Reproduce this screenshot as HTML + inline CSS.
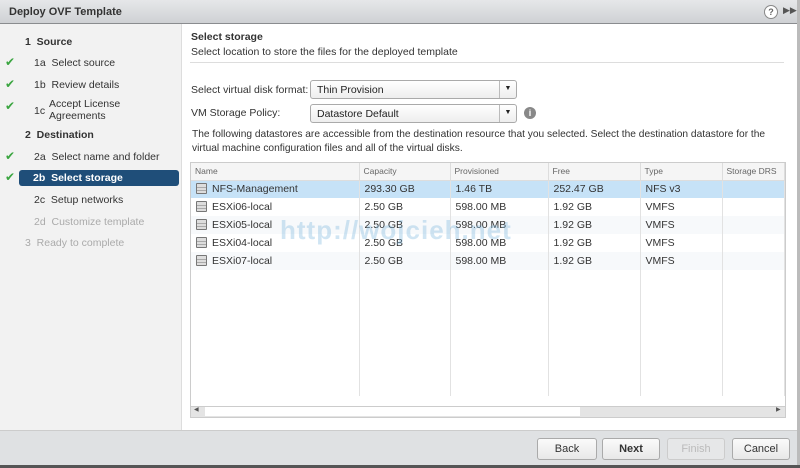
<!DOCTYPE html>
<html><head><style>
*{box-sizing:border-box;margin:0;padding:0}
body{width:800px;height:468px;overflow:hidden;background:#fff;font-family:"Liberation Sans",sans-serif;font-size:10.5px;color:#333;position:relative}
.abs{position:absolute}
.title{left:0;top:0;width:797px;height:24px;background:linear-gradient(#e6e7e9,#cfd1d4);border-bottom:1px solid #8a8c8f;font-weight:bold;font-size:11px;color:#333;padding:6px 9px}
.nav{left:0;top:24px;width:182px;height:406px;background:#f2f2f2;border-right:1px solid #ddd}
.nav div{position:absolute;font-size:10.5px;color:#333}
.nav .ck{color:#3aa540;font-size:12px;left:5px}
.nav .dis{color:#aaa}
.nav .sel{left:19px;width:160px;height:16px;background:#1f4e79;border-radius:3px;color:#fff;font-weight:bold;padding:2px 0 0 14px}
.footer{left:0;top:430px;width:797px;height:35px;background:#dfe1e3;border-top:1px solid #ccc}
.btn{position:absolute;top:438px;height:22px;border:1px solid #aaa;border-radius:3px;background:linear-gradient(#fafafa,#e8e8e8);text-align:center;padding-top:4px;font-size:11px}
.dd{position:absolute;left:310px;width:207px;height:19px;border:1px solid #aaa;border-radius:3px;background:linear-gradient(#fff,#eee);padding:3px 6px;font-size:10.5px;color:#222}
.dd span{position:absolute;right:0;top:0;width:17px;height:17px;border-left:1px solid #bbb;font-size:7px;text-align:center;padding-top:4px}
table{border-collapse:collapse;position:absolute;left:191px;top:163px;width:594px;font-size:10.5px;table-layout:fixed}
td{height:18px;padding:0 5px;border-right:1px solid #e2e2e2;white-space:nowrap;color:#333;overflow:hidden}
th{height:17px;font-weight:normal;font-size:8.5px;color:#666;text-align:left;padding:0 4px;border-right:1px solid #ddd;border-bottom:1px solid #ddd;background:#f5f5f5;white-space:nowrap;overflow:hidden}
.ic{display:inline-block;width:11px;height:11px;border:1px solid #777;background:linear-gradient(#ddd 33%,#777 33%,#777 40%,#ddd 40%,#ddd 66%,#777 66%,#777 73%,#ddd 73%);vertical-align:-2px;margin-right:5px;border-radius:1px}
</style></head><body>
<div class="abs title">Deploy OVF Template</div>
<div class="abs" style="left:764px;top:5px;width:14px;height:14px;border-radius:50%;border:1px solid #888;background:#fff;font-size:9px;text-align:center;font-weight:bold;color:#666;line-height:12px">?</div>
<div class="abs" style="left:783px;top:5px;font-size:9px;color:#555">▶▶</div>
<div class="abs" style="left:797px;top:0;width:3px;height:468px;background:#bbb"></div>
<div class="abs nav">
<div style="left:25px;top:12px;font-weight:bold">1&nbsp; Source</div>
<div class="ck" style="top:31px">✔</div><div style="left:34px;top:33px">1a&nbsp; Select source</div>
<div class="ck" style="top:53px">✔</div><div style="left:34px;top:55px">1b&nbsp; Review details</div>
<div class="ck" style="top:75px">✔</div><div style="left:34px;top:81px">1c</div><div style="left:49px;top:74px;line-height:12px">Accept License<br>Agreements</div>
<div style="left:25px;top:105px;font-weight:bold">2&nbsp; Destination</div>
<div class="ck" style="top:125px">✔</div><div style="left:34px;top:127px">2a&nbsp; Select name and folder</div>
<div class="ck" style="top:146px">✔</div><div class="sel" style="top:146px">2b&nbsp; Select storage</div>
<div style="left:34px;top:170px">2c&nbsp; Setup networks</div>
<div class="dis" style="left:34px;top:192px">2d&nbsp; Customize template</div>
<div class="dis" style="left:25px;top:213px">3&nbsp; Ready to complete</div>
</div>
<div class="abs" style="left:191px;top:31px;font-weight:bold">Select storage</div>
<div class="abs" style="left:191px;top:46px">Select location to store the files for the deployed template</div>
<div class="abs" style="left:190px;top:62px;width:594px;height:1px;background:#ddd"></div>
<div class="abs" style="left:191px;top:84px">Select virtual disk format:</div>
<div class="dd" style="top:80px">Thin Provision<span>▼</span></div>
<div class="abs" style="left:191px;top:107px">VM Storage Policy:</div>
<div class="dd" style="top:104px">Datastore Default<span>▼</span></div>
<div class="abs" style="left:524px;top:107px;width:12px;height:12px;border-radius:50%;background:#888;color:#fff;font-size:9px;font-weight:bold;text-align:center;line-height:12px">i</div>
<div class="abs" style="left:192px;top:128px;line-height:14px;width:605px;font-size:10.2px;white-space:nowrap">The following datastores are accessible from the destination resource that you selected. Select the destination datastore for the<br>virtual machine configuration files and all of the virtual disks.</div>
<div class="abs" style="left:190px;top:162px;width:596px;height:256px;border:1px solid #ccc;background:#fff"></div>
<table>
<colgroup><col style="width:168px"><col style="width:91px"><col style="width:98px"><col style="width:92px"><col style="width:82px"><col></colgroup>
<tr><th>Name</th><th>Capacity</th><th>Provisioned</th><th>Free</th><th>Type</th><th>Storage DRS</th></tr>
<tr style="background:#c6e2f7"><td><span class="ic"></span>NFS-Management</td><td>293.30 GB</td><td>1.46 TB</td><td>252.47 GB</td><td>NFS v3</td><td></td></tr>
<tr><td><span class="ic"></span>ESXi06-local</td><td>2.50 GB</td><td>598.00 MB</td><td>1.92 GB</td><td>VMFS</td><td></td></tr>
<tr style="background:#f7f9fb"><td><span class="ic"></span>ESXi05-local</td><td>2.50 GB</td><td>598.00 MB</td><td>1.92 GB</td><td>VMFS</td><td></td></tr>
<tr><td><span class="ic"></span>ESXi04-local</td><td>2.50 GB</td><td>598.00 MB</td><td>1.92 GB</td><td>VMFS</td><td></td></tr>
<tr style="background:#f7f9fb"><td><span class="ic"></span>ESXi07-local</td><td>2.50 GB</td><td>598.00 MB</td><td>1.92 GB</td><td>VMFS</td><td></td></tr>
<tr style="height:126px"><td></td><td></td><td></td><td></td><td></td><td></td></tr>
</table>
<div class="abs" style="left:191px;top:406px;width:594px;height:11px;background:#e4e4e4;border-top:1px solid #ccc"></div>
<div class="abs" style="left:205px;top:407px;width:375px;height:9px;background:#fff"></div>
<div class="abs" style="left:194px;top:406px;font-size:6px;color:#555">◀</div>
<div class="abs" style="left:776px;top:406px;font-size:6px;color:#555">▶</div>
<div class="abs" style="left:280px;top:215px;font-size:26px;font-weight:bold;color:rgba(120,180,220,.35);letter-spacing:1px">http://wojcieh.net</div>
<div class="abs footer"></div>
<div class="btn" style="left:537px;width:60px">Back</div>
<div class="btn" style="left:602px;width:58px;font-weight:bold">Next</div>
<div class="btn" style="left:667px;width:58px;color:#bbb;background:#e6e7e8;border-color:#ccc">Finish</div>
<div class="btn" style="left:732px;width:58px">Cancel</div>
<div class="abs" style="left:0;top:465px;width:800px;height:3px;background:#555"></div>
</body></html>
